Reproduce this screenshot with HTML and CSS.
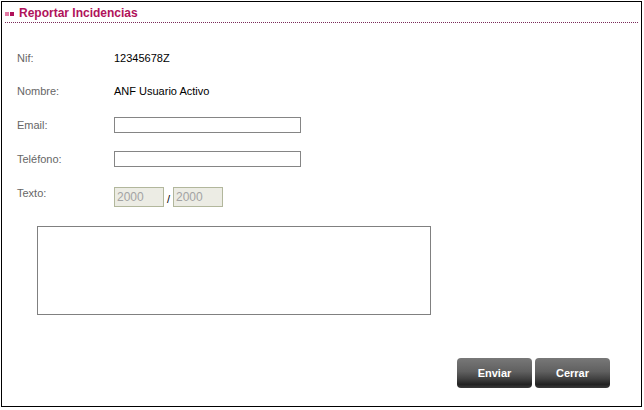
FILE: index.html
```html
<!DOCTYPE html>
<html lang="es">
<head>
<meta charset="utf-8">
<title>Reportar Incidencias</title>
<link rel="stylesheet" href="styles.css">
</head>
<body>
<div class="frame">
  <h1 class="title"><span class="bullet bullet-light"></span><span class="bullet bullet-dark"></span>Reportar Incidencias</h1>
  <form class="form">
    <div class="grid">
      <div class="label">Nif:</div>
      <div class="value">12345678Z</div>
      <div class="label">Nombre:</div>
      <div class="value">ANF Usuario Activo</div>
      <div class="label">Email:</div>
      <div class="value"><input class="field" type="text"></div>
      <div class="label">Teléfono:</div>
      <div class="value"><input class="field" type="text"></div>
      <div class="label label-top">Texto:</div>
      <div class="value counter"><input class="count" type="text" value="2000" disabled><span class="slash">/</span><input class="count" type="text" value="2000" disabled></div>
    </div>
    <textarea class="text"></textarea>
    <div class="actions">
      <button type="button" class="btn">Enviar</button>
      <button type="button" class="btn">Cerrar</button>
    </div>
  </form>
</div>
</body>
</html>
```
FILE: styles.css
```css
html, body {
  margin: 0;
  padding: 0;
  background: #fff;
}
body {
  font-family: "Liberation Sans", Arial, sans-serif;
  font-size: 11px;
}
.frame {
  margin: 1px 0 0 1px;
  width: 639px;
  height: 404px;
  border: 1px solid #000;
  display: flex;
  flex-direction: column;
}
.title {
  margin: 0 3px;
  padding: 4px 0 2px;
  font-size: 12px;
  line-height: 14px;
  font-weight: bold;
  color: #b0125a;
  border-bottom: 1px dotted #7a2a5a;
  display: flex;
  align-items: center;
}
.bullet {
  width: 4px;
  height: 4px;
  margin-top: 2px;
  margin-right: 1px;
}
.bullet-light { background: #e27aa4; }
.bullet-dark { background: #b0125a; margin-right: 5px; }
.form {
  margin: 0;
  padding: 18px 0 0 15px;
  display: flex;
  flex-direction: column;
  flex: 1;
}
.grid {
  display: grid;
  grid-template-columns: 97px auto;
  grid-template-rows: 34px 32px 35px 34px 40px;
  align-items: center;
}
.label {
  color: #666;
  line-height: 14px;
}
.label-top {
  align-self: start;
  padding-top: 10px;
}
.value {
  color: #000;
  line-height: 14px;
  display: flex;
  align-items: center;
}
.counter {
  padding-top: 1px;
}
.field {
  box-sizing: border-box;
  width: 187px;
  height: 16px;
  margin: 0;
  padding: 0;
  border: 1px solid #858585;
  background: #fff;
}
.count {
  box-sizing: border-box;
  width: 50px;
  height: 20px;
  margin: 0;
  padding: 0 2px;
  border: 1px solid #b2b79c;
  background: #ececE4;
  color: #a3a3a3;
  font-family: "Liberation Sans", Arial, sans-serif;
  font-size: 12px;
}
.slash {
  width: 9px;
  text-align: center;
  padding-top: 4px;
}
.text {
  box-sizing: border-box;
  width: 394px;
  height: 89px;
  margin: 10px 0 0 20px;
  padding: 0;
  border: 1px solid #808080;
  resize: none;
  display: block;
}
.actions {
  display: flex;
  justify-content: flex-end;
  gap: 3px;
  margin-top: 43px;
  padding-right: 31px;
}
.btn {
  width: 75px;
  height: 30px;
  margin: 0;
  padding: 0;
  border: 0;
  border-radius: 4px;
  background: linear-gradient(#787878, #606060 45%, #404040 70%, #222 88%, #3a3a3a);
  color: #fff;
  font-family: "Liberation Sans", Arial, sans-serif;
  font-size: 11px;
  font-weight: bold;
}
```
